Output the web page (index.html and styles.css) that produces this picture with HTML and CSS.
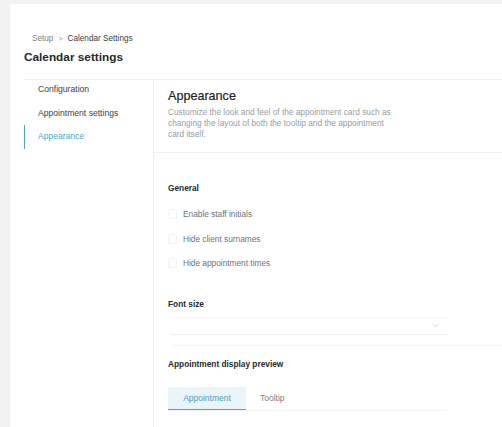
FILE: index.html
```html
<!DOCTYPE html>
<html>
<head>
<meta charset="utf-8">
<link rel="stylesheet" href="styles.css">
</head>
<body>
<div class="page">
  <div class="header">
    <div class="crumbs"><span class="crumb-muted">Setup</span><span class="sep">&gt;</span><span>Calendar Settings</span></div>
    <h1 class="title">Calendar settings</h1>
  </div>
  <div class="layout">
    <nav class="side">
      <a class="nav-item">Configuration</a>
      <a class="nav-item">Appointment settings</a>
      <a class="nav-item active">Appearance</a>
    </nav>
    <main class="content">
      <section class="intro">
        <h2 class="h2">Appearance</h2>
        <p class="desc">Customize the look and feel of the appointment card such as changing the layout of both the tooltip and the appointment card itself.</p>
      </section>
      <section class="body">
        <h3 class="h3 general">General</h3>
        <label class="check"><span class="box"></span>Enable staff initials</label>
        <label class="check"><span class="box"></span>Hide client surnames</label>
        <label class="check"><span class="box"></span>Hide appointment times</label>
        <h3 class="h3 fs">Font size</h3>
        <div class="select"><svg class="chev" viewBox="0 0 10 6" width="7" height="5"><path d="M1 1l4 4 4-4" fill="none" stroke="#c3c7cc" stroke-width="1.1"/></svg></div>
        <div class="rule"></div>
        <h3 class="h3 prev">Appointment display preview</h3>
        <div class="tabs">
          <div class="tab active">Appointment</div>
          <div class="tab">Tooltip</div>
        </div>
      </section>
    </main>
  </div>
</div>
</body>
</html>
```
FILE: styles.css
```css
html, body { margin: 0; padding: 0; }
body {
  background: #f1f2f4;
  font-family: "Liberation Sans", Arial, sans-serif;
  color: #2b2f33;
  width: 502px;
  height: 427px;
  overflow: hidden;
}
.page {
  background: #fff;
  margin: 4px 0 0 10px;
  height: 423px;
  display: flex;
  flex-direction: column;
}
.header { padding: 30px 0 0 14px; }
.crumbs { font-size: 8.2px; color: #3b4046; display: flex; gap: 5px; align-items: center; padding-left: 8px; }
.crumb-muted { color: #7b8187; }
.sep { color: #8a9096; font-size: 7px; }
.title { margin: 7px 0 0; font-size: 11.8px; font-weight: bold; color: #25292d; }
.layout {
  margin: 15px 0 0 14px;
  border-top: 1px solid #eef0f2;
  display: flex;
  flex: 1;
  min-height: 0;
}
.side {
  width: 129px;
  border-right: 1px solid #eef0f2;
  display: flex;
  flex-direction: column;
  padding-top: 4px;
}
.nav-item {
  font-size: 8.6px;
  color: #3a3f44;
  padding: 0 0 0 14px;
  height: 23.5px;
  line-height: 11px;
  display: block;
}
.nav-item.active {
  color: #4aa8c4;
  border-left: 1px solid #4aa8c4;
  padding-left: 13px;
  line-height: 23px;
  margin-top: -6px;
}
.content { flex: 1; }
.intro {
  padding: 9px 0 12px 14px;
  border-bottom: 1px solid #eef0f2;
}
.h2 { margin: 0; font-size: 12.6px; font-weight: normal; color: #1f2225; -webkit-text-stroke: 0.2px #1f2225; }
.desc { margin: 4px 0 0; font-size: 8.3px; line-height: 11px; color: #979da3; width: 232px; }
.body { padding: 30px 0 0 14px; }
.h3 { margin: 0; font-size: 8.3px; font-weight: bold; color: #26292c; }
.check {
  display: flex;
  align-items: center;
  font-size: 8.3px;
  color: #6c7277;
  height: 24.5px;
  gap: 6px;
}
.general { margin-bottom: 9px; }
.box { width: 7px; height: 8px; border: 1px solid #f3f4f5; border-radius: 1px; }
.fs { margin-top: 23px; }
.select {
  margin: 8px 0 0 2px;
  width: 277px;
  height: 18px;
  border-bottom: 1px solid #eceef0;
  border-top: 1px solid #f6f7f8;
  display: flex;
  justify-content: flex-end;
  align-items: center;
  padding-right: 8px;
  box-sizing: border-box;
}
.rule { height: 1px; background: #f3f4f5; margin: 10px 0 0 4px; }
.prev { margin-top: 13px; }
.tabs {
  margin-top: 18px;
  display: flex;
  width: 279px;
  border-bottom: 1px solid #f3f4f5;
}
.tab { font-size: 8.5px; color: #7b8187; height: 22px; line-height: 22px; padding: 0 14px; }
.tab.active {
  background: #eaf5fa;
  color: #4aa0bd;
  border-bottom: 1px solid #4aa8c4;
  width: 78px;
  padding: 0;
  text-align: center;
}
```
